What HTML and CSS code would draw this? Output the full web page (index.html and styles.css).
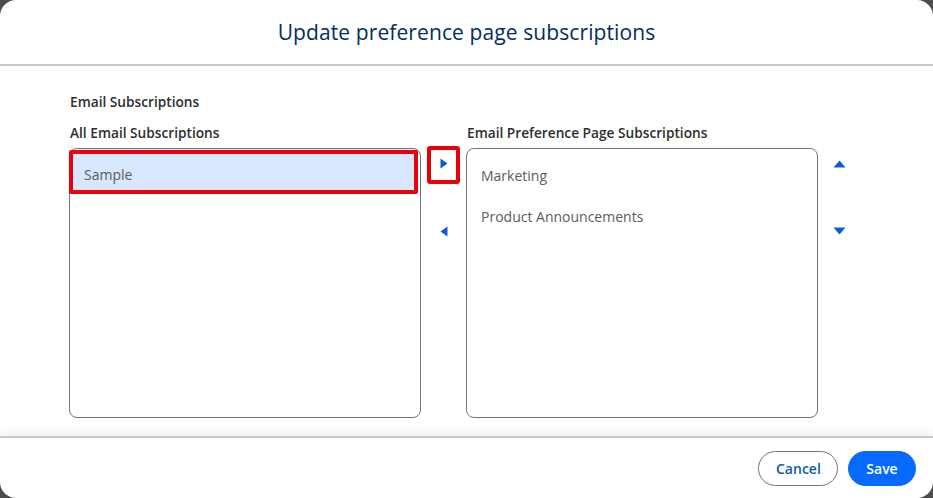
FILE: index.html
```html
<!DOCTYPE html>
<html lang="en">
<head>
<meta charset="utf-8">
<title>Update preference page subscriptions</title>
<link rel="stylesheet" href="styles.css">
</head>
<body>
<div class="modal">
  <header class="modal-header">
    <h1 class="modal-title">Update preference page subscriptions</h1>
  </header>
  <main class="modal-body">
    <div class="group-label">Email Subscriptions</div>
    <div class="dual">
      <div class="col-label">All Email Subscriptions</div>
      <div></div>
      <div class="col-label">Email Preference Page Subscriptions</div>
      <div></div>

      <ul class="listbox">
        <li class="option selected">Sample</li>
      </ul>
      <div class="move-buttons">
        <button class="icon-btn focused" aria-label="Move to selected">
          <svg width="8" height="11" viewBox="0 0 8 11"><path d="M0.5 0.5 L7.5 5.5 L0.5 10.5 Z" fill="#0b5cd5"/></svg>
        </button>
        <button class="icon-btn" aria-label="Move to available">
          <svg width="8" height="11" viewBox="0 0 8 11"><path d="M7.5 0.5 L0.5 5.5 L7.5 10.5 Z" fill="#0b5cd5"/></svg>
        </button>
      </div>
      <ul class="listbox listbox-selected">
        <li class="option">Marketing</li>
        <li class="option">Product Announcements</li>
      </ul>
      <div class="order-buttons">
        <button class="icon-btn" aria-label="Move up">
          <svg width="13" height="8" viewBox="0 0 13 8"><path d="M0.5 7.5 L6.5 0.5 L12.5 7.5 Z" fill="#0b5cd5"/></svg>
        </button>
        <button class="icon-btn" aria-label="Move down">
          <svg width="13" height="8" viewBox="0 0 13 8"><path d="M0.5 0.5 L6.5 7.5 L12.5 0.5 Z" fill="#0b5cd5"/></svg>
        </button>
      </div>
    </div>
  </main>
  <footer class="modal-footer">
    <button class="btn btn-neutral">Cancel</button>
    <button class="btn btn-brand">Save</button>
  </footer>
</div>
</body>
</html>
```
FILE: styles.css
```css
* { box-sizing: border-box; }
html, body { margin: 0; padding: 0; }
body {
  background: #4d4d4d;
  font-family: "Open Sans", "Noto Sans", sans-serif;
  width: 933px;
  height: 498px;
  overflow: hidden;
}
.modal {
  width: 933px;
  height: 498px;
  background: #fff;
  border-radius: 16px;
  display: flex;
  flex-direction: column;
  overflow: hidden;
}
.modal-header {
  height: 66px;
  border-bottom: 2px solid #c9c9c9;
  display: flex;
  align-items: center;
  justify-content: center;
}
.modal-title {
  margin: 0;
  font-size: 21px;
  font-weight: 400;
  color: #032d60;
  letter-spacing: 0.1px;
}
.modal-body {
  flex: 1;
  padding: 26px 0 0 70px;
}
.group-label {
  font-size: 13.7px;
  font-weight: 600;
  color: #2e2e2e;
  line-height: 20px;
  margin-bottom: 11px;
}
.dual {
  display: grid;
  grid-template-columns: 352px 45px 352px 44px;
  grid-template-rows: auto 270px;
  margin-left: -1px;
}
.col-label {
  font-size: 13.7px;
  font-weight: 600;
  color: #2e2e2e;
  line-height: 20px;
  margin: 0 0 5px 1px;
}
.listbox {
  list-style: none;
  margin: 0;
  padding: 1px 2px 0 0;
  border: 1px solid #747474;
  border-radius: 8px;
}
.listbox-selected { padding-top: 6px; }
.option {
  font-size: 14px;
  color: #5c5c5c;
  height: 41px;
  line-height: 41px;
  padding-left: 14px;
}
.option.selected {
  background: #d8e6fe;
  border: 4px solid #e8000b;
  border-radius: 2px;
  margin-left: -1px;
  height: 44px;
  line-height: 31px;
  padding-top: 5px;
  padding-left: 11px;
}
.move-buttons, .order-buttons {
  display: flex;
  flex-direction: column;
  align-items: center;
}
.move-buttons { margin-top: -2px; }
.order-buttons { padding-top: 9px; margin-left: -1px; }
.icon-btn {
  border: 0;
  background: transparent;
  padding: 0;
  width: 33px;
  height: 38px;
  display: flex;
  align-items: center;
  justify-content: center;
  border-radius: 3px;
}
.move-buttons .icon-btn + .icon-btn { margin-top: 28px; }
.order-buttons .icon-btn { height: 14px; }
.order-buttons .icon-btn + .icon-btn { margin-top: 53px; }
.icon-btn.focused {
  border: 4px solid #e8000b;
  padding-bottom: 4px;
}
.modal-footer {
  height: 62px;
  border-top: 2px solid #c9c9c9;
  box-shadow: 0 -5px 7px rgba(0, 0, 0, 0.05);
  display: flex;
  align-items: center;
  justify-content: flex-end;
  gap: 10px;
  padding: 0 17px 0 0;
  position: relative;
}
.btn {
  font-family: "Open Sans", "Noto Sans", sans-serif;
  font-size: 14px;
  font-weight: 600;
  height: 35px;
  border-radius: 18px;
  padding: 0 17px;
}
.btn-neutral {
  background: #fff;
  border: 1px solid #747474;
  color: #0b5cab;
  width: 80px;
}
.btn-brand {
  background: #066afe;
  border: 1px solid #066afe;
  color: #fff;
  width: 68px;
}
```
